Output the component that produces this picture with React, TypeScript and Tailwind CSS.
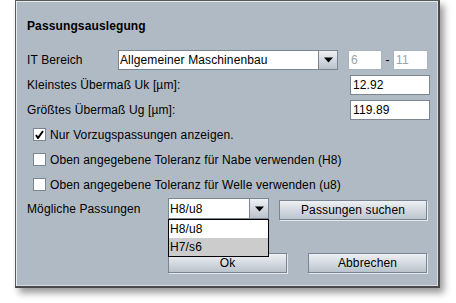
import { useState } from 'react'

const font = { fontFamily: '"Liberation Sans", Arial, sans-serif' }

function Arrow() {
  return (
    <svg width="9" height="6" viewBox="0 0 9 6">
      <path d="M0 0.5h9L4.5 5.5z" fill="#000" />
    </svg>
  )
}

function ArrowButton({ w }: { w: string }) {
  return (
    <div className={`${w} h-full flex items-center justify-center border-l border-[#7b8691] bg-gradient-to-b from-[#eef1f4] to-[#b9c2cb]`}>
      <Arrow />
    </div>
  )
}

function Button({ label, w }: { label: string; w: string }) {
  return (
    <button className={`${w} h-[20px] text-[12px] leading-none text-black border border-[#7a8591] bg-gradient-to-b from-[#eef1f4] to-[#bac3cc] shadow-[1px_1px_0_#e4e9ee]`}>
      {label}
    </button>
  )
}

function Field({ value, w, disabled }: { value: string; w: string; disabled?: boolean }) {
  return (
    <div
      className={`${w} h-[20px] flex items-center pl-[2px] text-[12px] bg-white border ${
        disabled ? 'border-[#a9b3bc] text-[#9aa2aa]' : 'border-[#7b8691] text-black'
      }`}
    >
      {value}
    </div>
  )
}

function Check({ checked, label }: { checked: boolean; label: string }) {
  return (
    <div className="h-[25px] flex items-center pl-[6px] gap-[4px]">
      <div className="w-[13px] h-[13px] bg-white border border-[#7b8691] flex items-center justify-center">
        {checked && (
          <svg width="9" height="9" viewBox="0 0 9 9">
            <path d="M1 5l2 3L8 1" stroke="#000" strokeWidth="2" fill="none" />
          </svg>
        )}
      </div>
      <span className="text-[12px]">{label}</span>
    </div>
  )
}

export default function App() {
  const [open] = useState(true)

  return (
    <div className="w-[456px] h-[303px] bg-white overflow-hidden tracking-[0.12px]" style={font}>
      <div className="ml-[15px] w-[425px] h-[288px] bg-[#b0bac4] border-l border-t border-[#5a5a5a] border-r-2 border-b-2 border-r-[#4a4a4a] border-b-[#4a4a4a] shadow-[inset_1px_1px_0_#e6ebf0,inset_-1px_-1px_0_#d5dce3,4px_5px_7px_rgba(0,0,0,0.4)] pl-[11px] pr-[8px] text-black">
        <div className="mt-[18px] h-[14px] leading-[14px] text-[12px] font-bold">Passungsauslegung</div>

        {/* IT Bereich */}
        <div className="mt-[17px] h-[20px] flex items-center">
          <span className="w-[91px] text-[12px]">IT Bereich</span>
          <div className="w-[220px] h-[20px] flex bg-white border border-[#7b8691]">
            <div className="flex-1 flex items-center pl-[1px] text-[12px]">Allgemeiner Maschinenbau</div>
            <ArrowButton w="w-[19px]" />
          </div>
          <div className="ml-[10px] flex items-center">
            <Field value="6" w="w-[34px]" disabled />
            <span className="w-[11px] text-center text-[12px]">-</span>
            <Field value="11" w="w-[35px]" disabled />
          </div>
        </div>

        <div className="mt-[5px] h-[20px] flex items-center justify-between">
          <span className="text-[12px]">Kleinstes Übermaß Uk [µm]:</span>
          <Field value="12.92" w="w-[80px]" />
        </div>

        <div className="mt-[4px] h-[21px] flex items-center justify-between">
          <span className="text-[12px]">Größtes Übermaß Ug [µm]:</span>
          <Field value="119.89" w="w-[80px]" />
        </div>

        <div className="mt-[2px]">
          <Check checked label="Nur Vorzugspassungen anzeigen." />
          <Check checked={false} label="Oben angegebene Toleranz für Nabe verwenden (H8)" />
          <Check checked={false} label="Oben angegebene Toleranz für Welle verwenden (u8)" />
        </div>

        {/* Mögliche Passungen */}
        <div className="mt-[1px] h-[21px] flex items-center">
          <span className="w-[141px] text-[12px]">Mögliche Passungen</span>
          <div className="relative w-[101px] h-[21px] flex bg-white border border-[#7b8691]">
            <div className="flex-1 flex items-center pl-[1px] text-[12px]">H8/u8</div>
            <ArrowButton w="w-[19px]" />
            {open && (
              <div className="absolute left-[-1px] top-[20px] w-[101px] border border-black bg-white z-10">
                <div className="h-[18px] flex items-center pl-[1px] text-[12px]">H8/u8</div>
                <div className="h-[18px] flex items-center pl-[1px] text-[12px] bg-[#cccccc]">H7/s6</div>
              </div>
            )}
          </div>
          <div className="ml-[10px]">
            <Button label="Passungen suchen" w="w-[148px]" />
          </div>
        </div>

        <div className="mt-[34px] pl-[141px] flex gap-[21px]">
          <Button label="Ok" w="w-[119px]" />
          <Button label="Abbrechen" w="w-[119px]" />
        </div>
      </div>
    </div>
  )
}
